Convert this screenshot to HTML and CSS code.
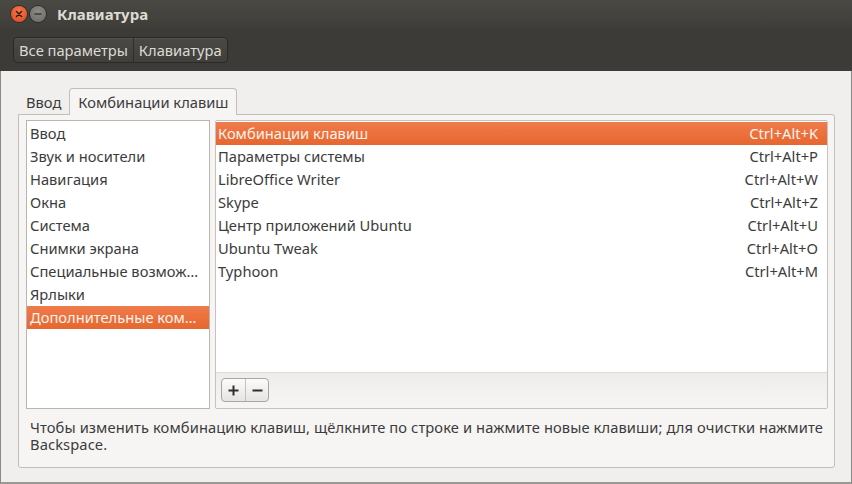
FILE: index.html
```html
<!DOCTYPE html>
<html lang="ru">
<head>
<meta charset="utf-8">
<title>Клавиатура</title>
<link rel="stylesheet" href="styles.css">
</head>
<body>
<div class="window">
  <header class="titlebar">
    <div class="wm-buttons">
      <span class="wm-btn close">
        <svg width="10" height="10" viewBox="0 0 10 10"><path d="M2.5 2.5 L7.5 7.5 M7.5 2.5 L2.5 7.5" stroke="#3a1a0e" stroke-width="1.6" stroke-linecap="round"/></svg>
      </span>
      <span class="wm-btn minimize">
        <svg width="10" height="10" viewBox="0 0 10 10"><path d="M2 5 H8" stroke="#3b3a37" stroke-width="1.6" stroke-linecap="round"/></svg>
      </span>
    </div>
    <div class="title">Клавиатура</div>
  </header>
  <div class="toolbar">
    <div class="crumbs">
      <span class="crumb">Все параметры</span>
      <span class="crumb">Клавиатура</span>
    </div>
  </div>
  <main class="content">
    <div class="tabs">
      <span class="tab">Ввод</span>
      <span class="tab active">Комбинации клавиш</span>
    </div>
    <section class="panel">
      <div class="columns">
        <ul class="categories">
          <li>Ввод</li>
          <li>Звук и носители</li>
          <li>Навигация</li>
          <li>Окна</li>
          <li>Система</li>
          <li>Снимки экрана</li>
          <li>Специальные возмож…</li>
          <li>Ярлыки</li>
          <li class="selected">Дополнительные ком…</li>
        </ul>
        <div class="shortcuts">
          <ul class="shortcut-list">
            <li class="selected"><span>Комбинации клавиш</span><span>Ctrl+Alt+K</span></li>
            <li><span>Параметры системы</span><span>Ctrl+Alt+P</span></li>
            <li><span>LibreOffice Writer</span><span>Ctrl+Alt+W</span></li>
            <li><span>Skype</span><span>Ctrl+Alt+Z</span></li>
            <li><span>Центр приложений Ubuntu</span><span>Ctrl+Alt+U</span></li>
            <li><span>Ubuntu Tweak</span><span>Ctrl+Alt+O</span></li>
            <li><span>Typhoon</span><span>Ctrl+Alt+M</span></li>
          </ul>
          <div class="list-toolbar">
            <div class="seg">
              <span class="seg-btn">
                <svg width="11" height="11" viewBox="0 0 11 11"><path d="M5.5 0.5 V10.5 M0.5 5.5 H10.5" stroke="#2f2f2f" stroke-width="2"/></svg>
              </span>
              <span class="seg-btn">
                <svg width="11" height="11" viewBox="0 0 11 11"><path d="M0.5 5.5 H10.5" stroke="#2f2f2f" stroke-width="2"/></svg>
              </span>
            </div>
          </div>
        </div>
      </div>
      <p class="hint">Чтобы изменить комбинацию клавиш, щёлкните по строке и нажмите новые клавиши; для очистки нажмите Backspace.</p>
    </section>
  </main>
</div>
</body>
</html>
```
FILE: styles.css
```css
* { box-sizing: border-box; }
html, body { margin: 0; padding: 0; }
body {
  width: 852px;
  height: 484px;
  overflow: hidden;
  font-family: "Noto Sans", "Open Sans", "DejaVu Sans", sans-serif;
  font-size: 14.7px;
  color: #3c3c3c;
  background: #3c3b37;
}
.window {
  width: 852px;
  height: 484px;
  display: flex;
  flex-direction: column;
}
.titlebar {
  height: 29px;
  display: flex;
  align-items: center;
  padding-left: 11px;
  background: linear-gradient(#4a4944, #3e3d39);
}
.wm-buttons { display: flex; gap: 3px; }
.wm-btn {
  width: 16px;
  height: 16px;
  border-radius: 50%;
  display: flex;
  align-items: center;
  justify-content: center;
  margin-top: -1px;
}
.wm-btn.close {
  background: radial-gradient(circle at 50% 35%, #f47a4b, #d9461c);
  box-shadow: 0 0 0 1px #2d2c29;
}
.wm-btn.minimize {
  background: radial-gradient(circle at 50% 35%, #8d8b85, #6b6964);
  box-shadow: 0 0 0 1px #2d2c29;
}
.title {
  margin-left: 11px;
  font-weight: bold;
  font-size: 15px;
  color: #dfdbd2;
  margin-top: -2px;
}
.toolbar {
  height: 42px;
  padding: 8px 0 0 13px;
  background: #3c3b37;
}
.crumbs {
  display: inline-flex;
  height: 26px;
  border: 1px solid #2a2926;
  border-radius: 4px;
  background: linear-gradient(#4a4944, #403f3b);
  box-shadow: inset 0 1px 0 rgba(255,255,255,0.06);
}
.crumb {
  display: flex;
  align-items: center;
  padding: 0 5px;
  color: #dcdad5;
}
.crumb + .crumb { border-left: 1px solid #2e2d2a; }
.content {
  flex: 1;
  background: #f0efee;
  padding: 17px 16px 0 17px;
  border-left: 1px solid #8a8985;
  border-right: 1px solid #8a8985;
  border-bottom: 2px solid #9a9995;
}
.tabs {
  display: flex;
  align-items: flex-end;
  height: 26px;
  position: relative;
  z-index: 1;
}
.tab {
  padding: 0 8px;
  height: 24px;
  display: flex;
  align-items: center;
}
.tab.active {
  height: 27px;
  margin-bottom: -1px;
  padding: 0 8px;
  border: 1px solid #c2bfba;
  border-bottom: none;
  border-radius: 4px 4px 0 0;
  background: #f6f5f4;
}
.panel {
  height: 354px;
  border: 1px solid #c2bfba;
  border-radius: 0 3px 3px 3px;
  background: #f6f5f4;
  padding: 5px 6px 0 7px;
}
.columns {
  display: flex;
  gap: 5px;
  height: 289px;
}
ul { list-style: none; margin: 0; padding: 0; }
.categories {
  width: 184px;
  background: #fff;
  border: 1px solid #b9b6b1;
  padding-top: 1px;
}
.categories li, .shortcut-list li {
  height: 23px;
  line-height: 23px;
  padding-left: 3px;
  white-space: nowrap;
}
.categories li.selected, .shortcut-list li.selected {
  background: linear-gradient(#f07b4b, #e6672f);
  color: #fcf3ee;
}
.shortcuts {
  flex: 1;
  border: 1px solid #c6c3be;
  border-radius: 2px;
  display: flex;
  flex-direction: column;
  background: #f3f2f1;
}
.shortcut-list {
  height: 252px;
  background: #fff;
  border-bottom: 1px solid #dcdad7;
  padding-top: 1px;
}
.shortcut-list li {
  display: flex;
  justify-content: space-between;
  padding-left: 2px;
  padding-right: 9px;
}
.list-toolbar {
  flex: 1;
  padding: 5px 0 0 5px;
  background: linear-gradient(#eeedec, #f6f5f4);
}
.seg {
  display: inline-flex;
  height: 24px;
  border: 1px solid #a9a6a1;
  border-radius: 4px;
  background: linear-gradient(#fbfbfa, #e6e4e1);
}
.seg-btn {
  width: 23px;
  display: flex;
  align-items: center;
  justify-content: center;
}
.seg-btn + .seg-btn { border-left: 1px solid #c4c1bc; }
.hint {
  margin: 10px 0 0 4px;
  width: 800px;
  line-height: 17px;
  letter-spacing: 0.1px;
}
```
